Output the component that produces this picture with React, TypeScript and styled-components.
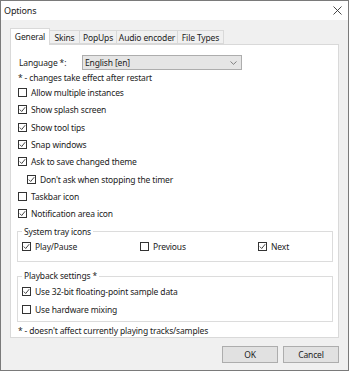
import styled, { createGlobalStyle } from 'styled-components';

const GlobalStyle = createGlobalStyle`
  html, body {
    margin: 0;
    padding: 0;
    background: #ffffff;
  }
  body {
    font-family: "Noto Sans", "Open Sans", sans-serif;
    font-size: 8.5px;
    letter-spacing: -0.15px;
    color: #222222;
  }
`;

const Window = styled.div`
  width: 349px;
  height: 371px;
  box-sizing: border-box;
  border: 1px solid #7a7a7a;
  display: flex;
  flex-direction: column;
  background: #f0f0f0;
`;

const TitleBar = styled.div`
  height: 19px;
  background: #ffffff;
  display: flex;
  align-items: center;
  justify-content: space-between;
  padding: 0 6px 0 3px;
  font-size: 9px;
`;

const Body = styled.div`
  flex: 1;
  display: flex;
  flex-direction: column;
  padding: 8px 9px 7px 9px;
`;

const TabRow = styled.div`
  display: flex;
  align-items: flex-end;
  height: 16px;
  position: relative;
  z-index: 1;
`;

const Tab = styled.div<{ $active?: boolean; $w: number }>`
  width: ${p => p.$w}px;
  box-sizing: border-box;
  height: ${p => (p.$active ? 17 : 14)}px;
  margin-bottom: ${p => (p.$active ? -1 : 0)}px;
  display: flex;
  align-items: center;
  justify-content: center;
  white-space: nowrap;
  padding-bottom: ${p => (p.$active ? 2 : 0)}px;
  background: ${p => (p.$active ? '#ffffff' : '#f0f0f0')};
  border: 1px solid #d9d9d9;
  border-bottom: ${p => (p.$active ? 'none' : '1px solid #d9d9d9')};
  margin-left: ${p => (p.$active ? 0 : -1)}px;
`;

const Panel = styled.div`
  height: 294px;
  box-sizing: border-box;
  background: #ffffff;
  border: 1px solid #d9d9d9;
  padding: 10px 5px 0 7px;
  display: flex;
  flex-direction: column;
`;

const LangRow = styled.div`
  display: flex;
  align-items: center;
  height: 15px;
`;

const LangLabel = styled.span`
  width: 63px;
  padding-left: 1px;
`;

const Combo = styled.div`
  width: 160px;
  height: 15px;
  box-sizing: border-box;
  background: #e5e5e5;
  border: 1px solid #adadad;
  display: flex;
  align-items: center;
  justify-content: space-between;
  padding: 0 4px 0 2px;
`;

const Note = styled.div`
  height: 12px;
  line-height: 12px;
  margin-top: 2px;
`;

const CheckRow = styled.label<{ $indent?: number; $h?: number }>`
  display: flex;
  align-items: center;
  height: ${p => p.$h ?? 17.5}px;
  padding-left: ${p => p.$indent ?? 0}px;
  gap: 4px;
  white-space: nowrap;
`;

const Box = styled.span`
  width: 9px;
  height: 9px;
  box-sizing: border-box;
  border: 1px solid #333333;
  background: #ffffff;
  display: flex;
  align-items: center;
  justify-content: center;
  flex-shrink: 0;
`;

const Group = styled.fieldset<{ $top: number; $bottom: number }>`
  margin: ${p => p.$top}px 0 0 -1px;
  width: 316px;
  box-sizing: border-box;
  border: 1px solid #dcdcdc;
  padding: 0 4px ${p => p.$bottom}px 4px;
  min-width: 0;
`;

const Legend = styled.legend`
  padding: 0 2px;
  height: 12px;
  line-height: 12px;
`;

const TrayRow = styled.div`
  display: grid;
  grid-template-columns: 118px 118px 1fr;
`;

const Footnote = styled.div`
  height: 12px;
  line-height: 12px;
  margin-top: 3px;
`;

const ButtonRow = styled.div`
  display: flex;
  justify-content: flex-end;
  gap: 5px;
  margin-top: 8px;
`;

const Button = styled.div`
  width: 56px;
  height: 17px;
  box-sizing: border-box;
  background: #e1e1e1;
  border: 1px solid #adadad;
  display: flex;
  align-items: center;
  justify-content: center;
`;

function Check({ on }: { on: boolean }) {
  return (
    <Box>
      {on && (
        <svg width="7" height="7" viewBox="0 0 7 7">
          <path d="M0.8 3.6 L2.7 5.5 L6.2 1.2" fill="none" stroke="#333" strokeWidth="0.9" />
        </svg>
      )}
    </Box>
  );
}

const options: [string, boolean, number?][] = [
  ['Allow multiple instances', false],
  ['Show splash screen', true],
  ['Show tool tips', true],
  ['Snap windows', true],
  ['Ask to save changed theme', true],
  ["Don't ask when stopping the timer", true, 9],
  ['Taskbar icon', false],
  ['Notification area icon', true],
];

const tabs: [string, number][] = [
  ['General', 40],
  ['Skins', 31],
  ['PopUps', 38],
  ['Audio encoder', 62],
  ['File Types', 47],
];

export default function App() {
  return (
    <>
      <GlobalStyle />
      <Window>
        <TitleBar>
          <span>Options</span>
          <svg width="9" height="9" viewBox="0 0 9 9">
            <path d="M0.5 0.5 L8.5 8.5 M8.5 0.5 L0.5 8.5" stroke="#333" strokeWidth="0.9" />
          </svg>
        </TitleBar>
        <Body>
          <TabRow>
            {tabs.map(([t, w], i) => (
              <Tab key={t} $active={i === 0} $w={w}>
                {t}
              </Tab>
            ))}
          </TabRow>
          <Panel>
            <LangRow>
              <LangLabel>Language *:</LangLabel>
              <Combo>
                <span>English [en]</span>
                <svg width="7" height="4" viewBox="0 0 7 4">
                  <path d="M0.5 0.5 L3.5 3.3 L6.5 0.5" fill="none" stroke="#666" strokeWidth="0.8" />
                </svg>
              </Combo>
            </LangRow>
            <Note>* - changes take effect after restart</Note>
            {options.map(([label, on, indent]) => (
              <CheckRow key={label} $indent={indent}>
                <Check on={on} />
                {label}
              </CheckRow>
            ))}
            <Group $top={3} $bottom={6}>
              <Legend>System tray icons</Legend>
              <TrayRow>
                <CheckRow>
                  <Check on />
                  Play/Pause
                </CheckRow>
                <CheckRow>
                  <Check on={false} />
                  Previous
                </CheckRow>
                <CheckRow>
                  <Check on />
                  Next
                </CheckRow>
              </TrayRow>
            </Group>
            <Group $top={8} $bottom={2}>
              <Legend>Playback settings *</Legend>
              <CheckRow $h={18.5}>
                <Check on />
                Use 32-bit floating-point sample data
              </CheckRow>
              <CheckRow $h={18.5}>
                <Check on={false} />
                Use hardware mixing
              </CheckRow>
            </Group>
            <Footnote>* - doesn't affect currently playing tracks/samples</Footnote>
          </Panel>
          <ButtonRow>
            <Button>OK</Button>
            <Button>Cancel</Button>
          </ButtonRow>
        </Body>
      </Window>
    </>
  );
}
